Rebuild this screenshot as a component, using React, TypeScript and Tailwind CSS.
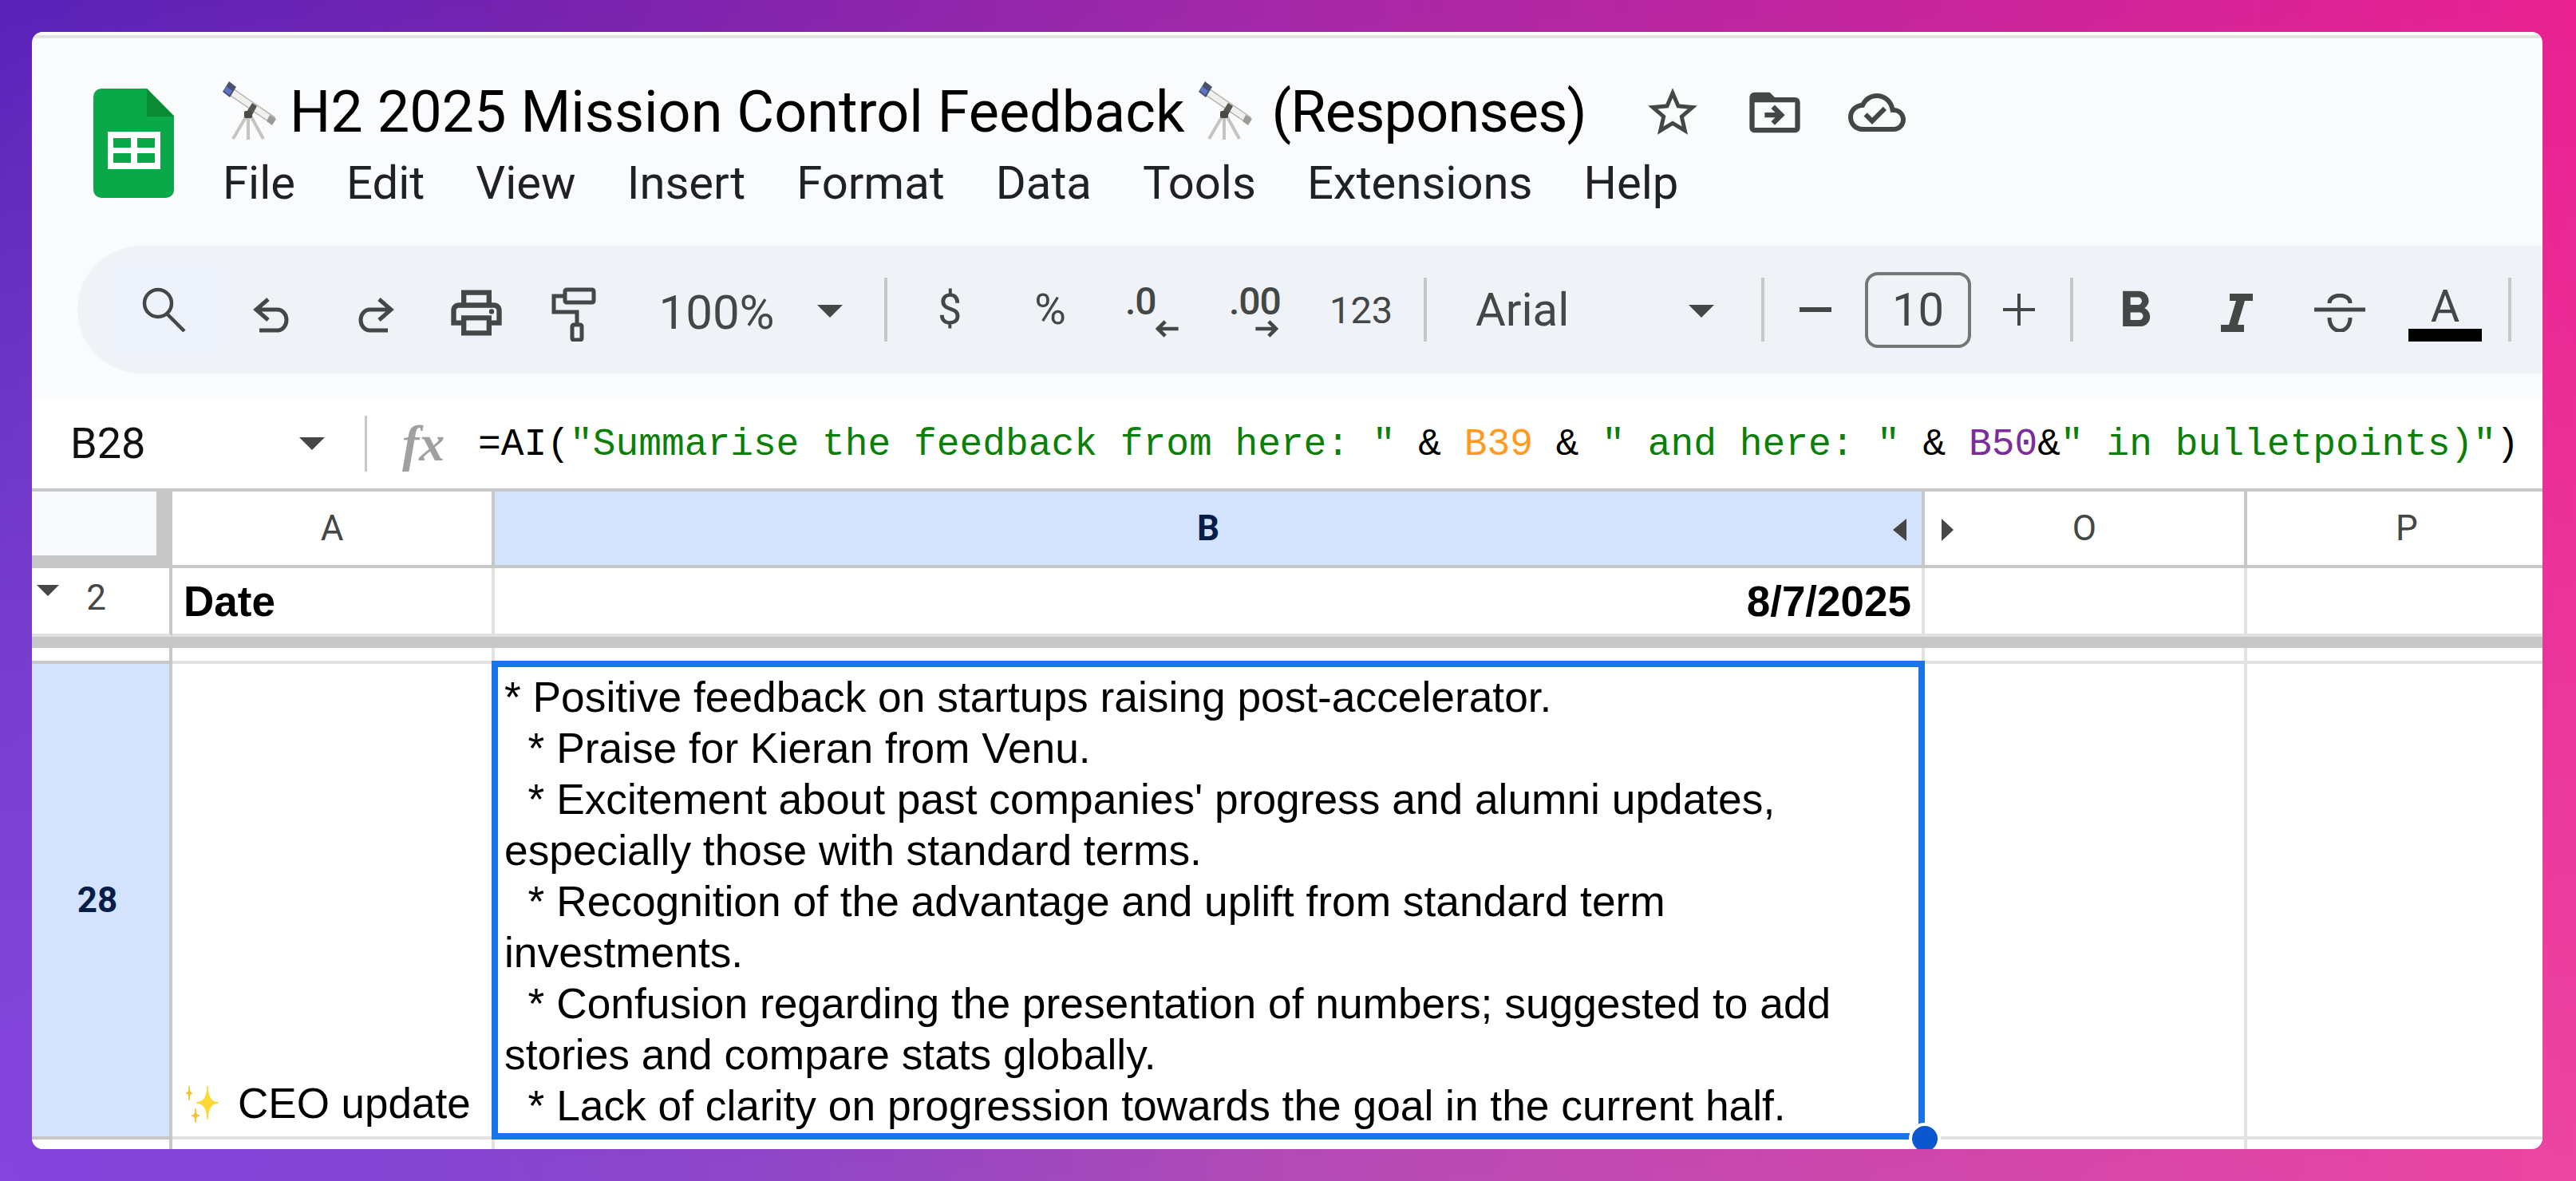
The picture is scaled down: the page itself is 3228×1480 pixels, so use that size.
const uiFont = "font-['Roboto','Noto_Sans',sans-serif]";
const cellFont = "font-['Liberation_Sans',Arial,sans-serif]";
const gridCols = "grid grid-cols-[176px_404px_1792px_404px_370px]";

const menus = ["File", "Edit", "View", "Insert", "Format", "Data", "Tools", "Extensions", "Help"];

const cellLines = [
    "* Positive feedback on startups raising post-accelerator.",
    "  * Praise for Kieran from Venu.",
    "  * Excitement about past companies' progress and alumni updates,",
    "especially those with standard terms.",
    "  * Recognition of the advantage and uplift from standard term",
    "investments.",
    "  * Confusion regarding the presentation of numbers; suggested to add",
    "stories and compare stats globally.",
    "  * Lack of clarity on progression towards the goal in the current half.",
];

function Telescope({ className }: { className: string }) {
    return (
        <svg viewBox="0 0 72 76" className={className}>
            <path d="M31 44 L14 73 M33 46 L33 74 M36 44 L52 73" stroke="#c4c5c0" strokeWidth="4" />
            <path d="M8 6 L66 46 L61 53 L4 14 Z" fill="#f1f0ec" stroke="#b4b4b0" strokeWidth="1.5" />
            <path d="M9 1 L18 8 L10 21 L1 14 Z" fill="#4a5070" />
            <path d="M5 7 L13 13 L9 18 L3 13 Z" fill="#5f74c4" />
            <path d="M60 43 L68 48 L63 56 L56 51 Z" fill="#9a9a97" />
            <path d="M38 28 L44 32 L38 43 L31 39 Z" fill="#55564f" />
            <rect x="28" y="38" width="10" height="9" rx="2" fill="#4a4b46" />
        </svg>
    );
}

function Sparkles() {
    return (
        <svg viewBox="0 0 48 48" className="w-[48px] h-[48px] mb-[6px] shrink-0">
            <path d="M29 0 Q29 21 43 21 Q29 21 29 42 Q29 21 15 21 Q29 21 29 0 Z" fill="#fdd835" stroke="#fdd835" strokeWidth="1.5" />
            <path d="M6 0 Q6 9 10 9 Q6 9 6 18 Q6 9 2 9 Q6 9 6 0 Z" fill="#fbc02d" stroke="#fbc02d" strokeWidth="1" />
            <path d="M14 28 Q14 37 19 37 Q14 37 14 46 Q14 37 9 37 Q14 37 14 28 Z" fill="#fbc02d" stroke="#fbc02d" strokeWidth="1" />
        </svg>
    );
}

function SheetsLogo() {
    return (
        <svg viewBox="0 0 101 137" className="w-[101px] h-[137px] shrink-0">
            <path d="M10 0 H67 L101 34 V127 a10 10 0 0 1 -10 10 H10 a10 10 0 0 1 -10 -10 V10 a10 10 0 0 1 10 -10 Z" fill="#0ba84a" />
            <path d="M67 0 L101 35 H67 Z" fill="#0a8a33" />
            <path d="M18 54 H84 V101 H18 Z" fill="#fff" />
            <path d="M25 62 H47 V74 H25 Z M55 62 H77 V74 H55 Z M25 81 H47 V93 H25 Z M55 81 H77 V93 H55 Z" fill="#0ba84a" />
        </svg>
    );
}

function Icon({ d, size, className = "" }: { d: string; size: string; className?: string }) {
    return (
        <svg viewBox="0 0 24 24" className={`${size} shrink-0 ${className}`} fill="#444746">
            <path d={d} />
        </svg>
    );
}

function Caret({ className }: { className: string }) {
    return (
        <svg viewBox="0 0 32 16" className={className} fill="#444746">
            <path d="M0 0 H32 L16 16 Z" />
        </svg>
    );
}

function Divider({ className }: { className: string }) {
    return <div className={`w-[4px] h-[80px] bg-[#c7c7c7] shrink-0 ${className}`} />;
}

function DecimalIcon({ label, right, className }: { label: string; right?: boolean; className: string }) {
    return (
        <div className={`relative w-[68px] h-[64px] mt-[6px] shrink-0 ${className}`}>
            <span className="block text-[48px] leading-[38px] tracking-[-1px] text-[#444746] font-medium">{label}</span>
            <svg viewBox="0 0 32 24" className={`absolute bottom-0 w-[32px] h-[22px] ${right ? "right-[4px]" : "right-0"}`} fill="none" stroke="#444746" strokeWidth="5">
                <path d={right ? "M0 12 H28 M18 2 L28 12 L18 22" : "M32 12 H4 M14 2 L4 12 L14 22"} />
            </svg>
        </div>
    );
}

function Toolbar() {
    return (
        <div className={`ml-[57px] h-[160px] shrink-0 bg-[#eff3f8] rounded-l-[80px] flex items-center text-[#444746] ${uiFont}`}>
            {/* search */}
            <div className="ml-[33px] w-[150px] h-[111px] bg-[#edf2fb] flex items-center justify-center shrink-0">
                <svg viewBox="0 0 56 56" className="w-[56px] h-[56px]" fill="none" stroke="#444746" strokeWidth="4.5">
                    <circle cx="21" cy="20" r="17" />
                    <path d="M32 33 L54 55" />
                </svg>
            </div>
            {/* undo */}
            <svg viewBox="0 0 50 44" className="ml-[36px] w-[50px] h-[44px] mt-[13px] shrink-0" fill="none" stroke="#444746" strokeWidth="5">
                <path d="M20 2 L5 15 L20 28 M5 15 H32 A11 13 0 0 1 32 41 H9" />
            </svg>
            {/* redo */}
            <svg viewBox="0 0 50 44" className="ml-[79px] w-[50px] h-[44px] mt-[13px] shrink-0" fill="none" stroke="#444746" strokeWidth="5">
                <path d="M30 2 L45 15 L30 28 M45 15 H18 A11 13 0 0 0 18 41 H41" />
            </svg>
            <Icon
                size="w-[76px] h-[76px]"
                className="ml-[64px] mt-[8px]"
                d="M19 8h-1V3H6v5H5c-1.66 0-3 1.34-3 3v6h4v4h12v-4h4v-6c0-1.66-1.34-3-3-3zM8 5h8v3H8V5zm8 12v2H8v-4h8v2zm2-2v-2H6v2H4v-4c0-.55.45-1 1-1h14c.55 0 1 .45 1 1v4h-2zM18 10.5a1 1 0 1 0 0 2 1 1 0 0 0 0-2z"
            />
            {/* paint format */}
            <svg viewBox="0 0 56 68" className="ml-[56px] w-[56px] h-[68px] mt-[12px] shrink-0" fill="none" stroke="#444746" strokeWidth="5">
                <rect x="17" y="3" width="36" height="16" rx="2" />
                <path d="M17 11 H3 V31 H32 V46" />
                <rect x="26" y="47" width="12" height="19" rx="2" />
            </svg>
            <span className="ml-[77px] w-[148px] mt-[8px] text-[60px] leading-none text-center shrink-0">100%</span>
            <Caret className="ml-[52px] w-[32px] h-[16px] mt-[4px] shrink-0" />
            <Divider className="ml-[52px]" />
            <span className="ml-[63px] w-[28px] text-[54px] leading-none text-center shrink-0">$</span>
            <span className="ml-[92px] w-[42px] text-[54px] leading-none text-center shrink-0">%</span>
            <DecimalIcon label=".0" className="ml-[73px]" />
            <DecimalIcon label=".00" right className="ml-[62px]" />
            <span className="ml-[58px] w-[74px] text-[47px] leading-none text-center shrink-0">123</span>
            <Divider className="ml-[44px]" />
            <span className="ml-[61px] w-[119px] text-[58px] leading-none shrink-0">Arial</span>
            <Caret className="ml-[148px] w-[32px] h-[16px] mt-[4px] shrink-0" />
            <Divider className="ml-[59px]" />
            <div className="ml-[44px] w-[40px] h-[6px] bg-[#444746] shrink-0" />
            <div className="ml-[42px] w-[133px] h-[95px] border-[4px] border-[#747775] rounded-[16px] flex items-center justify-center text-[58px] leading-none shrink-0">10</div>
            <div className="ml-[40px] relative w-[40px] h-[40px] shrink-0">
                <div className="absolute left-0 top-[18px] w-[40px] h-[4px] bg-[#444746]" />
                <div className="absolute left-[18px] top-0 w-[4px] h-[40px] bg-[#444746]" />
            </div>
            <Divider className="ml-[44px]" />
            <Icon size="w-[76px] h-[76px]" className="ml-[40px] mt-[4px]" d="M15.6 10.79c.97-.67 1.65-1.77 1.65-2.79 0-2.26-1.75-4-4-4H7v14h7.04c2.09 0 3.71-1.7 3.71-3.79 0-1.52-.86-2.82-2.15-3.42zM10 6.5h3c.83 0 1.5.67 1.5 1.5s-.67 1.5-1.5 1.5h-3v-3zm3.5 9H10v-3h3.5c.83 0 1.5.67 1.5 1.5s-.67 1.5-1.5 1.5z" />
            {/* italic */}
            <svg viewBox="0 0 40 48" className="ml-[69px] mt-[8px] w-[40px] h-[48px] shrink-0" fill="#444746">
                <path d="M11 0 H40 V9 H30 L21 39 H29 V48 H0 V39 H10 L19 9 H11 Z" />
            </svg>
            {/* strikethrough */}
            <svg viewBox="0 0 64 48" className="ml-[77px] mt-[8px] w-[64px] h-[48px] shrink-0" fill="none" stroke="#444746" strokeWidth="5">
                <path d="M0 20 H64 M19 12 C19 -1 45 -1 45 12 M19 30 C19 52 45 52 45 30" />
            </svg>
            <div className="ml-[54px] mt-[14px] w-[92px] h-[66px] flex flex-col items-center justify-between shrink-0">
                <span className="text-[56px] leading-[44px]">A</span>
                <div className="w-[92px] h-[16px] bg-black" />
            </div>
            <Divider className="ml-[33px]" />
        </div>
    );
}

function FormulaBar() {
    return (
        <div className="h-[112px] shrink-0 bg-white flex items-center">
            <span className={`ml-[48px] w-[287px] text-[54px] leading-none text-[#111] shrink-0 ${uiFont}`}>B28</span>
            <Caret className="w-[32px] h-[16px] shrink-0" />
            <div className="ml-[50px] w-[3px] h-[70px] bg-[#c7c7c7] shrink-0" />
            <span className="ml-[44px] w-[56px] text-[64px] leading-none text-[#a0a0a0] italic font-bold font-['Liberation_Serif',serif] shrink-0">fx</span>
            <div className="ml-[39px] mt-[3px] text-[47.9px] leading-none whitespace-pre text-black font-['Liberation_Mono',monospace]">
                =AI(<span className="text-[#0a8008]">"Summarise the feedback from here: "</span> &amp; <span className="text-[#ff9a1f]">B39</span> &amp; <span className="text-[#0a8008]">" and here: "</span> &amp; <span className="text-[#7b2d9b]">B50</span>&amp;<span className="text-[#0a8008]">" in bulletpoints)"</span>)
            </div>
        </div>
    );
}

function Sheet() {
    return (
        <div className={`flex-1 bg-white border-t-[4px] border-[#c7c7c7] overflow-hidden ${cellFont}`}>
            {/* column headers */}
            <div className={`${gridCols} h-[96px] text-[44px] text-[#444746] font-['Roboto',sans-serif]`}>
                <div className="bg-[#c7c7c7]">
                    <div className="w-[156px] h-[80px] bg-[#f8f9fa]" />
                </div>
                <div className="border-r-[4px] border-b-[4px] border-[#c7c7c7] flex items-center justify-center">A</div>
                <div className="relative border-r-[4px] border-b-[4px] border-[#c7c7c7] bg-[#d3e3fd] flex items-center justify-center font-bold text-[#041e49]">
                    B
                    <svg viewBox="0 0 17 28" className="absolute right-[19px] top-[34px] w-[17px] h-[28px]" fill="#444746"><path d="M17 0 V28 L0 14 Z" /></svg>
                </div>
                <div className="relative border-r-[4px] border-b-[4px] border-[#c7c7c7] flex items-center justify-center">
                    O
                    <svg viewBox="0 0 15 28" className="absolute left-[21px] top-[34px] w-[15px] h-[28px]" fill="#444746"><path d="M0 0 V28 L15 14 Z" /></svg>
                </div>
                <div className="border-b-[4px] border-[#c7c7c7] flex items-center justify-center pl-[30px]">P</div>
            </div>
            {/* frozen row */}
            <div className={`${gridCols} h-[84px] text-[53px] font-bold text-black`}>
                <div className="relative border-r-[4px] border-b-[4px] border-r-[#c7c7c7] border-b-[#e1e1e1] flex items-center justify-end pr-[79px] pb-[8px] text-[44px] font-normal text-[#444746] font-['Roboto',sans-serif]">
                    2
                    <Caret className="absolute left-[6px] top-[20px] w-[28px] h-[16px]" />
                </div>
                <div className="border-r-[4px] border-b-[4px] border-[#e1e1e1] flex items-center pl-[14px] pt-[2px]">Date</div>
                <div className="border-r-[4px] border-b-[4px] border-[#e1e1e1] flex items-center justify-end pr-[13px] pt-[2px]">8/7/2025</div>
                <div className="border-r-[4px] border-b-[4px] border-[#e1e1e1]" />
                <div className="border-b-[4px] border-[#e1e1e1]" />
            </div>
            <div className="h-[16px] bg-[#c7c7c7]" />
            {/* row above the selection */}
            <div className={`${gridCols} h-[20px]`}>
                <div className="border-r-[4px] border-b-[4px] border-[#c7c7c7]" />
                <div className="border-r-[4px] border-b-[4px] border-[#e1e1e1]" />
                <div className="border-r-[4px] border-b-[4px] border-[#e1e1e1]" />
                <div className="border-r-[4px] border-b-[4px] border-[#e1e1e1]" />
                <div className="border-b-[4px] border-[#e1e1e1]" />
            </div>
            {/* row 28 */}
            <div className={`${gridCols} h-[596px]`}>
                <div className="bg-[#d3e3fd] border-r-[4px] border-b-[4px] border-[#c7c7c7] flex items-center justify-center pr-[8px] text-[44px] font-bold text-[#041e49] font-['Roboto',sans-serif]">28</div>
                <div className="border-r-[4px] border-b-[4px] border-[#e1e1e1] flex items-end gap-[19px] pl-[15px] pb-[9px] text-[53px] leading-[64px] text-black whitespace-nowrap">
                    <Sparkles />
                    <span>CEO update</span>
                </div>
                {/* selected cell */}
                <div className="relative -mt-[4px] -ml-[4px] h-[600px] border-[8px] border-[#1a73e8] flex flex-col justify-end pl-[8px] pb-[2px] text-[53.3px] leading-[64px] text-black whitespace-pre z-10">
                    {cellLines.map((line, i) => (
                        <div key={i}>{line}</div>
                    ))}
                    <div className="absolute -right-[28px] -bottom-[27px] w-[40px] h-[40px] rounded-full bg-[#0b57d0] border-[4px] border-white" />
                </div>
                <div className="border-r-[4px] border-b-[4px] border-[#e1e1e1]" />
                <div className="border-b-[4px] border-[#e1e1e1]" />
            </div>
            <div className={`${gridCols} h-[12px]`}>
                <div className="border-r-[4px] border-[#c7c7c7]" />
                <div className="border-r-[4px] border-[#e1e1e1]" />
                <div className="border-r-[4px] border-[#e1e1e1]" />
                <div className="border-r-[4px] border-[#e1e1e1]" />
                <div />
            </div>
        </div>
    );
}

export default function App() {
    return (
        <div className="w-[3228px] h-[1480px] overflow-hidden pt-[40px] pl-[40px] bg-[radial-gradient(circle_at_0%_100%,#8444dd_0%,rgba(132,68,221,0)_45%),linear-gradient(to_bottom,rgba(255,255,255,0)_0%,rgba(255,255,255,0.16)_100%),linear-gradient(to_right,#551fb5_0%,#a528a8_50%,#ea2190_100%)]">
            <div className="w-[3146px] h-[1400px] rounded-[14px] overflow-hidden bg-[#f9fbfd] flex flex-col">
                <div className="h-[8px] shrink-0 bg-white border-b-[4px] border-[#e3e4e0]" />
                {/* title block */}
                <div className="h-[260px] shrink-0 flex items-start">
                    <div className="ml-[77px] mt-[63px]">
                        <SheetsLogo />
                    </div>
                    <div className={`ml-[55px] ${uiFont}`}>
                        <div className="mt-[48px] h-[90px] flex items-center text-[72px] leading-none text-black whitespace-nowrap">
                            <Telescope className="ml-[5px] w-[72px] h-[76px] shrink-0 -mt-[4px]" />
                            <span className="ml-[13px]">H2 2025 Mission Control Feedback</span>
                            <Telescope className="w-[72px] h-[76px] shrink-0 -mt-[4px] ml-[17px]" />
                            <span className="ml-[20px] tracking-[-0.8px]">(Responses)</span>
                            <Icon size="w-[74px] h-[74px]" className="ml-[71px]" d="M22 9.24l-7.19-.62L12 2 9.19 8.63 2 9.24l5.46 4.73L5.82 21 12 17.27 18.18 21l-1.63-7.03L22 9.24zM12 15.4l-3.76 2.27 1-4.28-3.32-2.88 4.38-.38L12 6.1l1.71 4.04 4.38.38-3.32 2.88 1 4.28L12 15.4z" />
                            <Icon size="w-[76px] h-[76px]" className="ml-[53px]" d="M20 6h-8l-2-2H4c-1.1 0-1.99.9-1.99 2L2 18c0 1.1.9 2 2 2h16c1.1 0 2-.9 2-2V8c0-1.1-.9-2-2-2zm0 12H4V8h16v10zm-8.01-9l-1.41 1.41L12.16 12H8v2h4.16l-1.59 1.59L11.99 17 16 13l-4.01-4z" />
                            <Icon size="w-[72px] h-[72px]" className="ml-[54px]" d="M19.35 10.04C18.67 6.59 15.64 4 12 4 9.11 4 6.6 5.64 5.35 8.04 2.34 8.36 0 10.91 0 14c0 3.31 2.69 6 6 6h13c2.76 0 5-2.24 5-5 0-2.64-2.05-4.78-4.65-4.96zM19 18H6c-2.21 0-4-1.79-4-4 0-2.05 1.53-3.76 3.56-3.97l1.07-.11.5-.95C8.08 7.14 9.94 6 12 6c2.62 0 4.88 1.86 5.39 4.43l.3 1.5 1.53.11c1.56.1 2.78 1.41 2.78 2.96 0 1.65-1.35 3-3 3zm-9-3.82l-2.09-2.09L6.5 13.5 10 17l6.01-6.01-1.41-1.41z" />
                        </div>
                        <div className="mt-[14px] ml-[6px] flex gap-[64px] text-[58px] leading-none text-[#202124]">
                            {menus.map((m) => (
                                <span key={m}>{m}</span>
                            ))}
                        </div>
                    </div>
                </div>
                <Toolbar />
                <div className="h-[32px] shrink-0" />
                <FormulaBar />
                <Sheet />
            </div>
        </div>
    );
}
